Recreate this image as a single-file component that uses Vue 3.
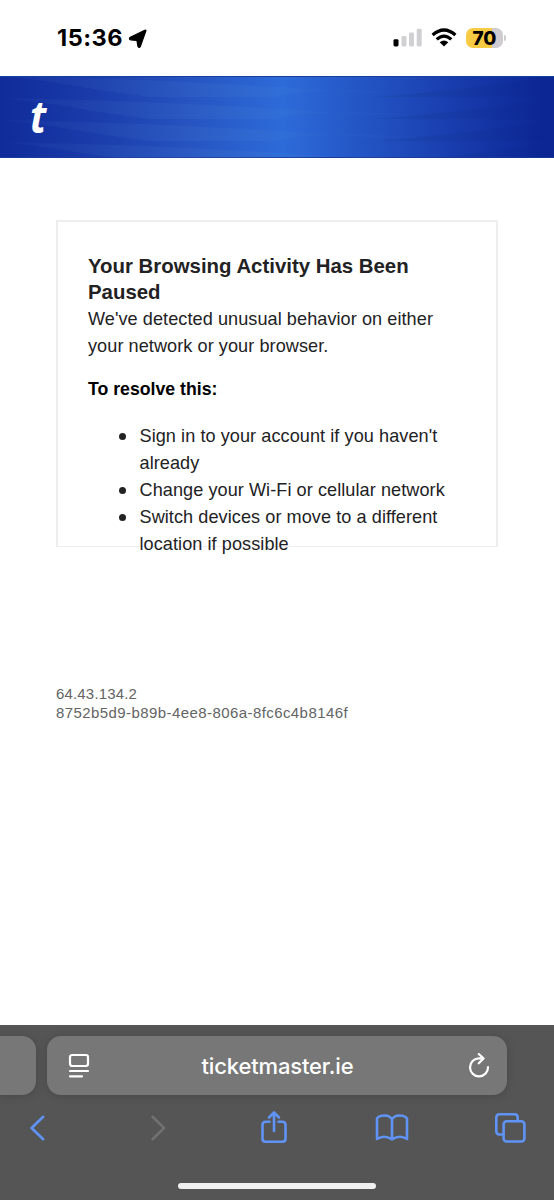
<script setup>
const steps = [
  ["Sign in to your account if you haven't", 'already'],
  ['Change your Wi-Fi or cellular network'],
  ['Switch devices or move to a different', 'location if possible'],
]
const waves = [-22, 0, 22, 44, 66]
</script>

<template>
  <div class="phone">
    <div class="status">
      <span class="time">15:36</span>
      <svg class="arrow" width="20" height="20" viewBox="0 0 20 20"><path d="M17.800 2 12.300 17.500Q11.200 19.400 10 17.500L8.900 11.500 2.500 10.800Q0.500 9.900 2.300 8.300L16.800 1.200Q18.300 .7 17.800 2Z" stroke="#000" stroke-width="1.200" stroke-linejoin="round" /></svg>
      <svg class="signal" width="30" height="20" viewBox="0 0 30 20">
        <rect x="0.500" y="11.200" width="5" height="7.300" rx="1.400" fill="#000" />
        <g fill="#d0d0d2">
          <rect x="8.500" y="8" width="5" height="10.500" rx="1.400" />
          <rect x="16" y="4.500" width="5" height="14" rx="1.400" />
          <rect x="23.700" y=".7" width="5" height="17.800" rx="1.400" />
        </g>
      </svg>
      <svg class="wifi" width="26" height="20" viewBox="0 0 26 20" fill="none" stroke="#000" stroke-width="3.300">
        <path d="M1.600 7.100Q13-3 24.400 7.100" />
        <path d="M5.700 11.400Q13 4.800 20.300 11.400" />
        <path d="M8.700 14.300Q13 10.900 17.300 14.300L13 18.600Z" fill="#000" stroke="none" />
      </svg>
      <div class="battery">70</div>
      <div class="cap"></div>
    </div>

    <header class="banner">
      <svg class="pattern" width="554" height="82" viewBox="0 0 554 82" preserveAspectRatio="none">
        <defs>
          <linearGradient id="glow">
            <stop offset="0" stop-color="#5b7fd0" stop-opacity=".06" />
            <stop offset=".55" stop-color="#4a86cc" stop-opacity=".16" />
            <stop offset="1" stop-color="#4a86cc" stop-opacity="0" />
          </linearGradient>
          <linearGradient id="shade">
            <stop offset="0" stop-color="#164394" stop-opacity=".32" />
            <stop offset="1" stop-color="#08208a" stop-opacity=".15" />
          </linearGradient>
        </defs>
        <g v-for="y in waves" :key="y" :transform="`translate(0 ${y})`">
          <path d="M5 22C90 24 180 27 277 33S390 42 430 38C350 36 290 36 277 43L150 43C100 37 60 28 5 22Z" fill="url(#glow)" />
          <path d="M374 21C430 17 490 10 554 0V21Z" fill="url(#shade)" />
        </g>
      </svg>
      <span class="logo">t</span>
    </header>

    <main>
      <section class="card">
        <h1>Your Browsing Activity Has Been<br />Paused</h1>
        <p>We've detected unusual behavior on either<br />your network or your browser.</p>
        <h2>To resolve this:</h2>
        <ul>
          <li v-for="(lines, i) in steps" :key="i">
            <span v-for="line in lines" :key="line" class="line">{{ line }}</span>
          </li>
        </ul>
      </section>
      <div class="trace">
        <div class="ip">64.43.134.2</div>
        <div class="uuid">8752b5d9-b89b-4ee8-806a-8fc6c4b8146f</div>
      </div>
    </main>

    <footer class="browser">
      <div class="tabs">
        <div class="previous"></div>
        <div class="address">
          <svg width="22" height="26" viewBox="0 0 22 26" fill="none" stroke="#fff" stroke-width="2.200" stroke-linecap="round">
            <rect x="2" y="2" width="18" height="11" rx="2.200" />
            <path d="M2 18H20M2 23.300H14" />
          </svg>
          <span class="domain">ticketmaster.ie</span>
          <svg width="22" height="26" viewBox="0 0 22 26" fill="none" stroke="#fff" stroke-width="2.200" stroke-linecap="round" stroke-linejoin="round">
            <path d="M20 14A9 9 0 1 1 11 5.400H15.300M10.800 1 15.500 5.400 10.800 10.300" />
          </svg>
        </div>
      </div>
      <nav>
        <svg width="36" height="36" viewBox="0 0 36 36"><path d="M23.200 7.800 11.600 19 23.200 30.200" /></svg>
        <svg class="off" width="36" height="36" viewBox="0 0 36 36"><path d="M14.500 7.800 26.100 19 14.500 30.200" /></svg>
        <svg width="36" height="36" viewBox="0 0 36 36"><path d="M13.500 12.800H9.500Q6.500 12.800 6.500 15.800V29.800Q6.500 32.800 9.500 32.800H26.500Q29.500 32.800 29.500 29.800V15.800Q29.500 12.800 26.500 12.800H22.500M18 22V3.500M13 8.500 18 3.500 23 8.500" /></svg>
        <svg width="36" height="36" viewBox="0 0 36 36"><path d="M18 10.500Q16 6.500 10.500 6.500 5 6.500 3 9.500V30Q10 25.300 18 30.300 26 25.300 33 30V9.500Q31 6.500 25.500 6.500 20 6.500 18 10.500ZM18 10.500V30.300" /></svg>
        <svg width="36" height="36" viewBox="0 0 36 36"><rect x="11.600" y="12.300" width="20.800" height="20.200" rx="3" /><path d="M11.600 25.500H7.500Q4.300 25.500 4.300 22.300V8.500Q4.300 5.300 7.500 5.300H22.500Q25.700 5.300 25.700 8.500V12.300" /></svg>
      </nav>
      <div class="home"></div>
    </footer>
  </div>
</template>

<style>
body {
  background: #fff;
}
</style>

<style scoped>
.phone {
  width: 554px;
  height: 1200px;
  display: flex;
  flex-direction: column;
  overflow: hidden;
  background: #fff;
  font-family: "Liberation Sans", Arial, sans-serif;
}
.status {
  height: 76px;
  box-sizing: border-box;
  padding: 0 48px 0 57px;
  display: flex;
  align-items: center;
  flex: none;
}
.time {
  width: 71px;
  font: 700 23.500px/28px Inter, sans-serif;
  letter-spacing: 0.500px;
}
.arrow {
  margin-top: 1px;
}
.signal {
  margin: 0 8px 0 auto;
}
.wifi {
  margin-right: 9px;
}
.battery {
  width: 37px;
  height: 20px;
  border-radius: 7px;
  background: linear-gradient(90deg, #f8cb45 70%, #ceccd1 70%);
  font: 800 19px/21px Inter, sans-serif;
  text-align: center;
}
.cap {
  width: 2px;
  height: 6px;
  margin-left: 1px;
  border-radius: 0 3px 3px 0;
  background: #ceccd1;
}
.banner {
  height: 82px;
  flex: none;
  position: relative;
  box-sizing: border-box;
  padding: 14px 0 0 30px;
  background: linear-gradient(90deg, #102b9a 0%, #1a3caa 17%, #2552bf 33%, #2d6bd9 51%, #2457c6 64%, #1a3fb0 80%, #0c2795 98%);
  border-top: 1px solid #173f9b;
  border-bottom: 1px solid #193b9d;
}
.pattern {
  position: absolute;
  inset: -1px 0;
}
.logo {
  position: relative;
  display: block;
  width: 20px;
  font: italic 700 45px/50px "Open Sans", sans-serif;
  color: #fff;
  transform: scaleX(0.88);
  transform-origin: left;
}
main {
  height: 867px;
  box-sizing: border-box;
  padding: 62px 56px 0;
}
.card {
  height: 327px;
  box-sizing: border-box;
  border: 2px solid #eee;
  border-bottom-width: 1px;
  padding: 31px 0 0 30px;
  color: #222224;
  font-size: 18.100px;
  line-height: 27px;
  letter-spacing: 0.07px;
  white-space: nowrap;
}
h1,
h2,
p,
ul {
  margin: 0;
}
h1 {
  font-size: 20.400px;
  line-height: 26px;
  letter-spacing: 0;
}
p {
  padding-top: 1px;
}
h2 {
  margin-top: 16px;
  font-size: 17.700px;
  line-height: 27px;
  letter-spacing: 0;
  color: #000;
}
ul {
  margin-top: 20px;
  padding-left: 51.500px;
  list-style: none;
}
li {
  position: relative;
}
li::before {
  content: "";
  position: absolute;
  left: -21px;
  top: 10px;
  width: 7px;
  height: 7px;
  border-radius: 50%;
  background: #222;
}
.line {
  display: block;
}
.trace {
  margin-top: 137px;
  color: #646464;
  font-size: 15px;
  line-height: 19px;
}
.ip {
  letter-spacing: 0.17px;
}
.uuid {
  letter-spacing: 0.42px;
}
.browser {
  height: 175px;
  flex: none;
  background: #555;
  box-sizing: border-box;
  padding-top: 11px;
}
.tabs {
  display: flex;
  gap: 11px;
}
.previous,
.address {
  height: 59px;
  background: #777;
  box-shadow: 0 1px 9px rgba(0, 0, 0, 0.17);
}
.previous {
  width: 36px;
  border-radius: 0 14px 14px 0;
}
.address {
  width: 460px;
  box-sizing: border-box;
  border-radius: 14px;
  display: flex;
  align-items: center;
  justify-content: space-between;
  padding: 0 17px 0 21px;
  color: #fff;
  font: 500 22px/28px Inter, sans-serif;
}
.domain {
  margin-right: 3px;
  letter-spacing: -0.150px;
}
nav {
  display: flex;
  justify-content: space-between;
  margin: 14px 0 0;
  padding: 0 26px 0 20px;
}
nav svg {
  fill: none;
  stroke: #5f93f5;
  stroke-width: 2.600;
  stroke-linecap: round;
  stroke-linejoin: round;
}
nav .off {
  stroke: #717171;
}
.home {
  width: 198px;
  height: 6px;
  margin: 38px auto 0;
  border-radius: 3px;
  background: #f0f0f0;
}
</style>
